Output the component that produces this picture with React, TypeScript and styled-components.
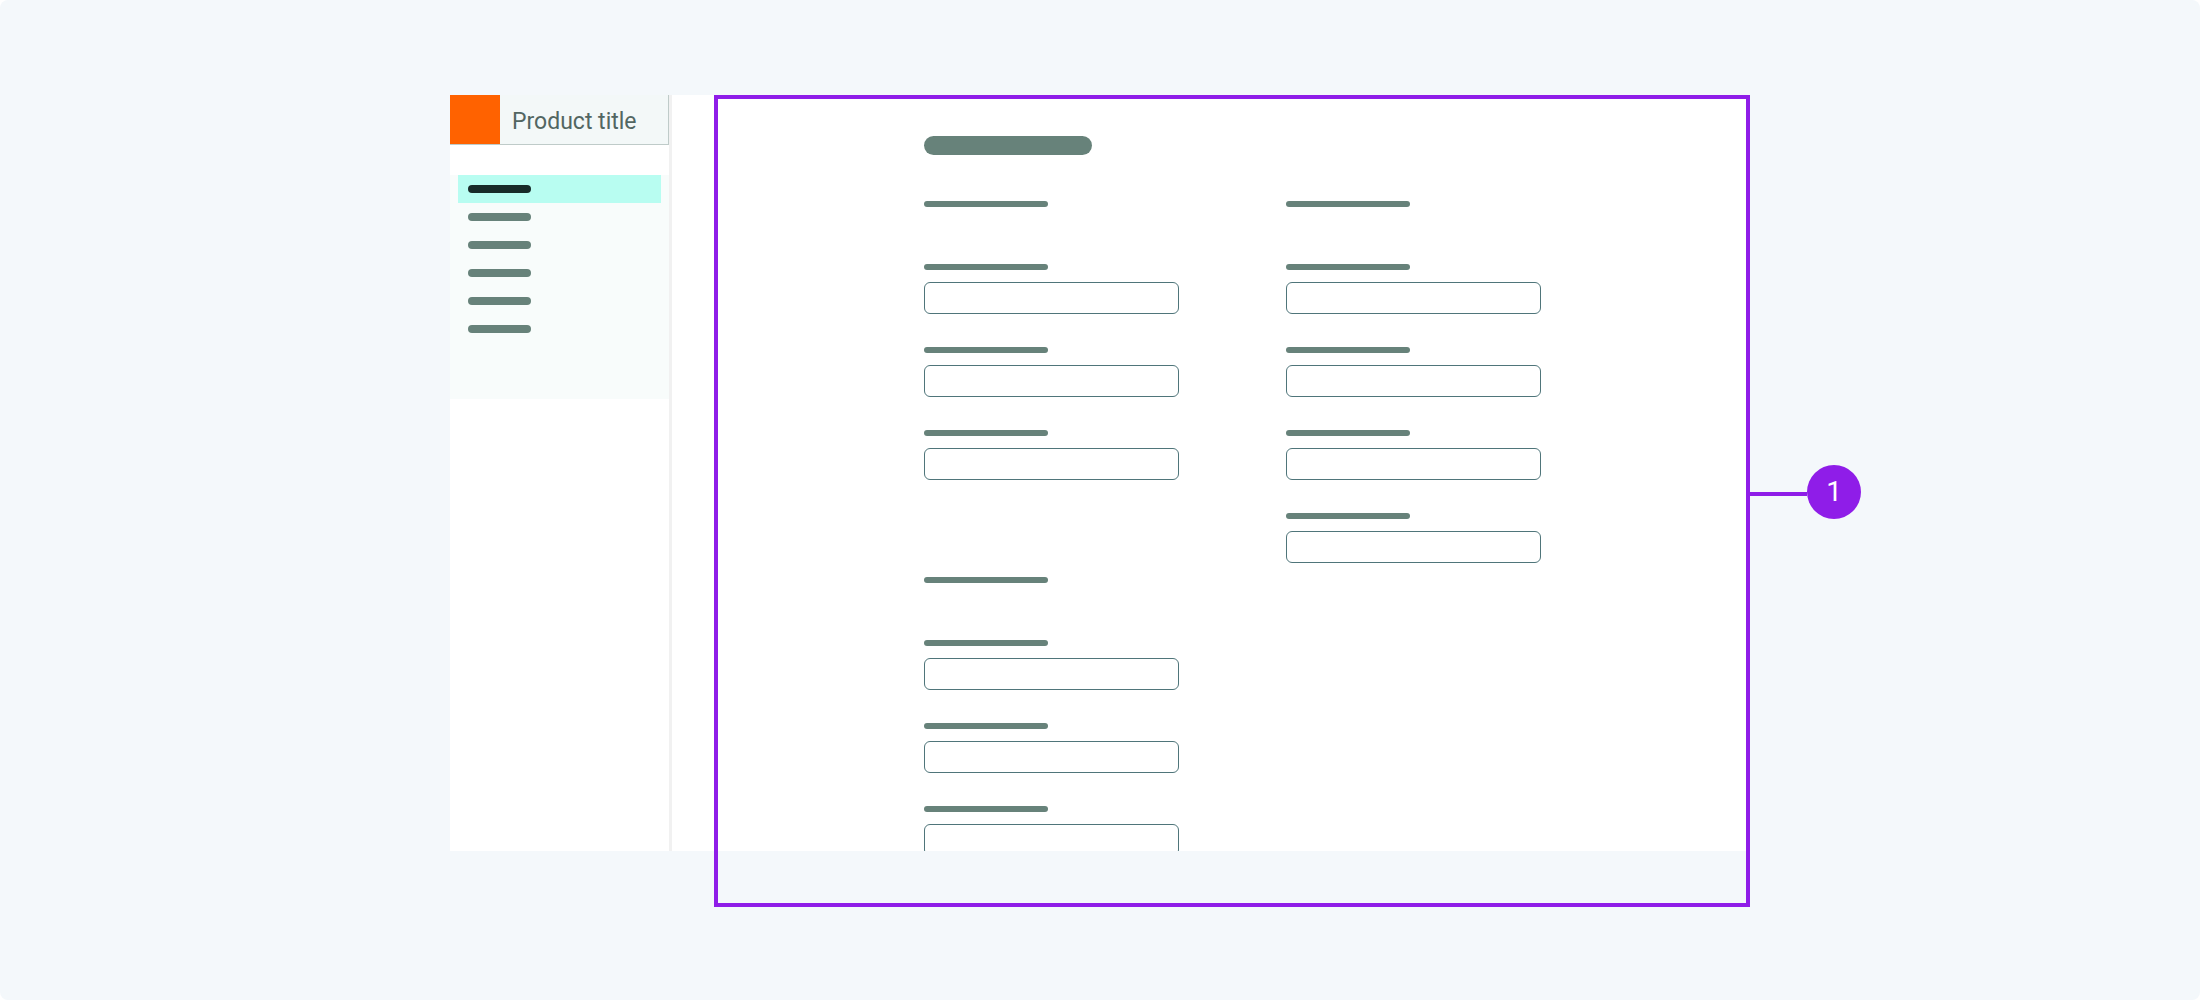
import React, { useId } from "react";
import styled, { createGlobalStyle, ThemeProvider } from "styled-components";

const theme = {
  canvas: "#f4f8fb",
  surface: "#ffffff",
  header: "#f3f8f8",
  headerLine: "#bfcbc9",
  nav: "#f8fcfb",
  active: "#b8fdf1",
  ink: "#182b29",
  bar: "#67827a",
  field: "#4f757a",
  divider: "#f1f1f1",
  brand: "#ff6200",
  callout: "#8f1de8",
  title: "#526662",
};
type Theme = typeof theme;
type T = { theme: Theme };

const GlobalStyle = createGlobalStyle`
  *, *::before, *::after { box-sizing: border-box; }
  body { margin: 0; background: #fff; font-family: Roboto, "Noto Sans", sans-serif; }
  h1, h2, ul { margin: 0; padding: 0; }
`;

const Page = styled.div`
  min-height: 100vh;
  padding: 95px 40px 149px;
  border-radius: 8px;
  background: ${({ theme }: T) => theme.canvas};
`;

const Stage = styled.div`
  position: relative;
  max-width: 1300px;
  margin: 0 auto;
`;

const Window = styled.div`
  display: grid;
  grid-template-columns: 222px minmax(0, 1fr);
  height: calc(100vh - 244px);
  overflow: hidden;
  background: ${({ theme }: T) => theme.surface};
`;

const Sidebar = styled.aside`
  border-right: 3px solid ${({ theme }: T) => theme.divider};
`;

const ProductHeader = styled.header`
  display: flex;
  height: 50px;
  border: solid ${({ theme }: T) => theme.headerLine};
  border-width: 0 1px 1px 0;
  background: ${({ theme }: T) => theme.header};
`;

const Brand = styled.div`
  width: 50px;
  background: ${({ theme }: T) => theme.brand};
`;

const ProductTitle = styled.span`
  padding: 0 12px;
  color: ${({ theme }: T) => theme.title};
  font-size: 23px;
  line-height: 54px;
  white-space: nowrap;
`;

const Nav = styled.nav`
  height: 224px;
  margin-top: 30px;
  padding: 0 8px;
  background: ${({ theme }: T) => theme.nav};
`;

const NavList = styled.ul`
  list-style: none;
`;

const NavLink = styled.a<{ $active?: boolean }>`
  display: flex;
  align-items: center;
  height: 28px;
  padding: 0 10px;
  color: ${({ theme, $active }) => ($active ? (theme as Theme).ink : (theme as Theme).bar)};
  background: ${({ theme, $active }) => ($active ? (theme as Theme).active : "transparent")};
`;

const Bar = styled.span<{ $width: number; $height: number }>`
  display: block;
  width: ${({ $width }) => $width}px;
  height: ${({ $height }) => $height}px;
  border-radius: 10px;
  background: currentColor;
`;

const Form = styled.form`
  padding: 41px 42px 0 252px;
  color: ${({ theme }: T) => theme.bar};
`;

const Columns = styled.div`
  display: grid;
  grid-template-columns: repeat(2, minmax(0, 255px));
  column-gap: 107px;
  margin-top: 46px;
`;

const Column = styled.div`
  display: flex;
  flex-direction: column;
  gap: 97px;
`;

const Section = styled.section`
  display: flex;
  flex-direction: column;
  gap: 57px;
`;

const Fields = styled.div`
  display: flex;
  flex-direction: column;
  gap: 33px;
`;

const Field = styled.div`
  display: flex;
  flex-direction: column;
  gap: 12px;
`;

const Input = styled.input`
  width: 100%;
  height: 32px;
  padding: 0 12px;
  border: 1px solid ${({ theme }: T) => theme.field};
  border-radius: 6px;
  background: ${({ theme }: T) => theme.surface};
  font: inherit;
`;

/* The outlined region runs past the bottom of the window. */
const Outline = styled.div`
  position: absolute;
  inset: 0 0 -56px 264px;
  border: 4px solid ${({ theme }: T) => theme.callout};
  pointer-events: none;
`;

const Callout = styled.div`
  position: absolute;
  top: 366px;
  left: 100%;
  display: flex;
  align-items: flex-start;
`;

const Connector = styled.span`
  width: 61px;
  height: 4px;
  margin-top: 27px;
  background: ${({ theme }: T) => theme.callout};
`;

const Badge = styled.span`
  display: grid;
  place-items: center;
  width: 54px;
  height: 54px;
  border-radius: 50%;
  background: ${({ theme }: T) => theme.callout};
  color: #fff;
  font-size: 28px;
  line-height: 32px;
`;

function TextField({ name }: { name: string }) {
  const id = useId();
  return (
    <Field>
      <label htmlFor={id} aria-label={name}>
        <Bar $width={124} $height={6} />
      </label>
      <Input id={id} type="text" aria-label={name} />
    </Field>
  );
}

function FieldSection({ name, count }: { name: string; count: number }) {
  return (
    <Section>
      <h2 aria-label={name}>
        <Bar $width={124} $height={6} />
      </h2>
      <Fields>
        {Array.from({ length: count }, (_, i) => (
          <TextField key={i} name={`${name} field ${i + 1}`} />
        ))}
      </Fields>
    </Section>
  );
}

export default function App() {
  return (
    <ThemeProvider theme={theme}>
      <GlobalStyle />
      <Page>
        <Stage>
          <Window>
            <Sidebar>
              <ProductHeader>
                <Brand />
                <ProductTitle>Product title</ProductTitle>
              </ProductHeader>
              <Nav aria-label="Product">
                <NavList>
                  {[1, 2, 3, 4, 5, 6].map((n) => (
                    <li key={n}>
                      <NavLink href={`#page-${n}`} $active={n === 1} aria-label={`Page ${n}`}>
                        <Bar $width={63} $height={8} />
                      </NavLink>
                    </li>
                  ))}
                </NavList>
              </Nav>
            </Sidebar>
            <main>
              <Form>
                <h1 aria-label="Form">
                  <Bar $width={168} $height={19} />
                </h1>
                <Columns>
                  <Column>
                    <FieldSection name="Section one" count={3} />
                    <FieldSection name="Section two" count={3} />
                  </Column>
                  <Column>
                    <FieldSection name="Section three" count={4} />
                  </Column>
                </Columns>
              </Form>
            </main>
          </Window>
          <Outline>
            <Callout>
              <Connector />
              <Badge>1</Badge>
            </Callout>
          </Outline>
        </Stage>
      </Page>
    </ThemeProvider>
  );
}
